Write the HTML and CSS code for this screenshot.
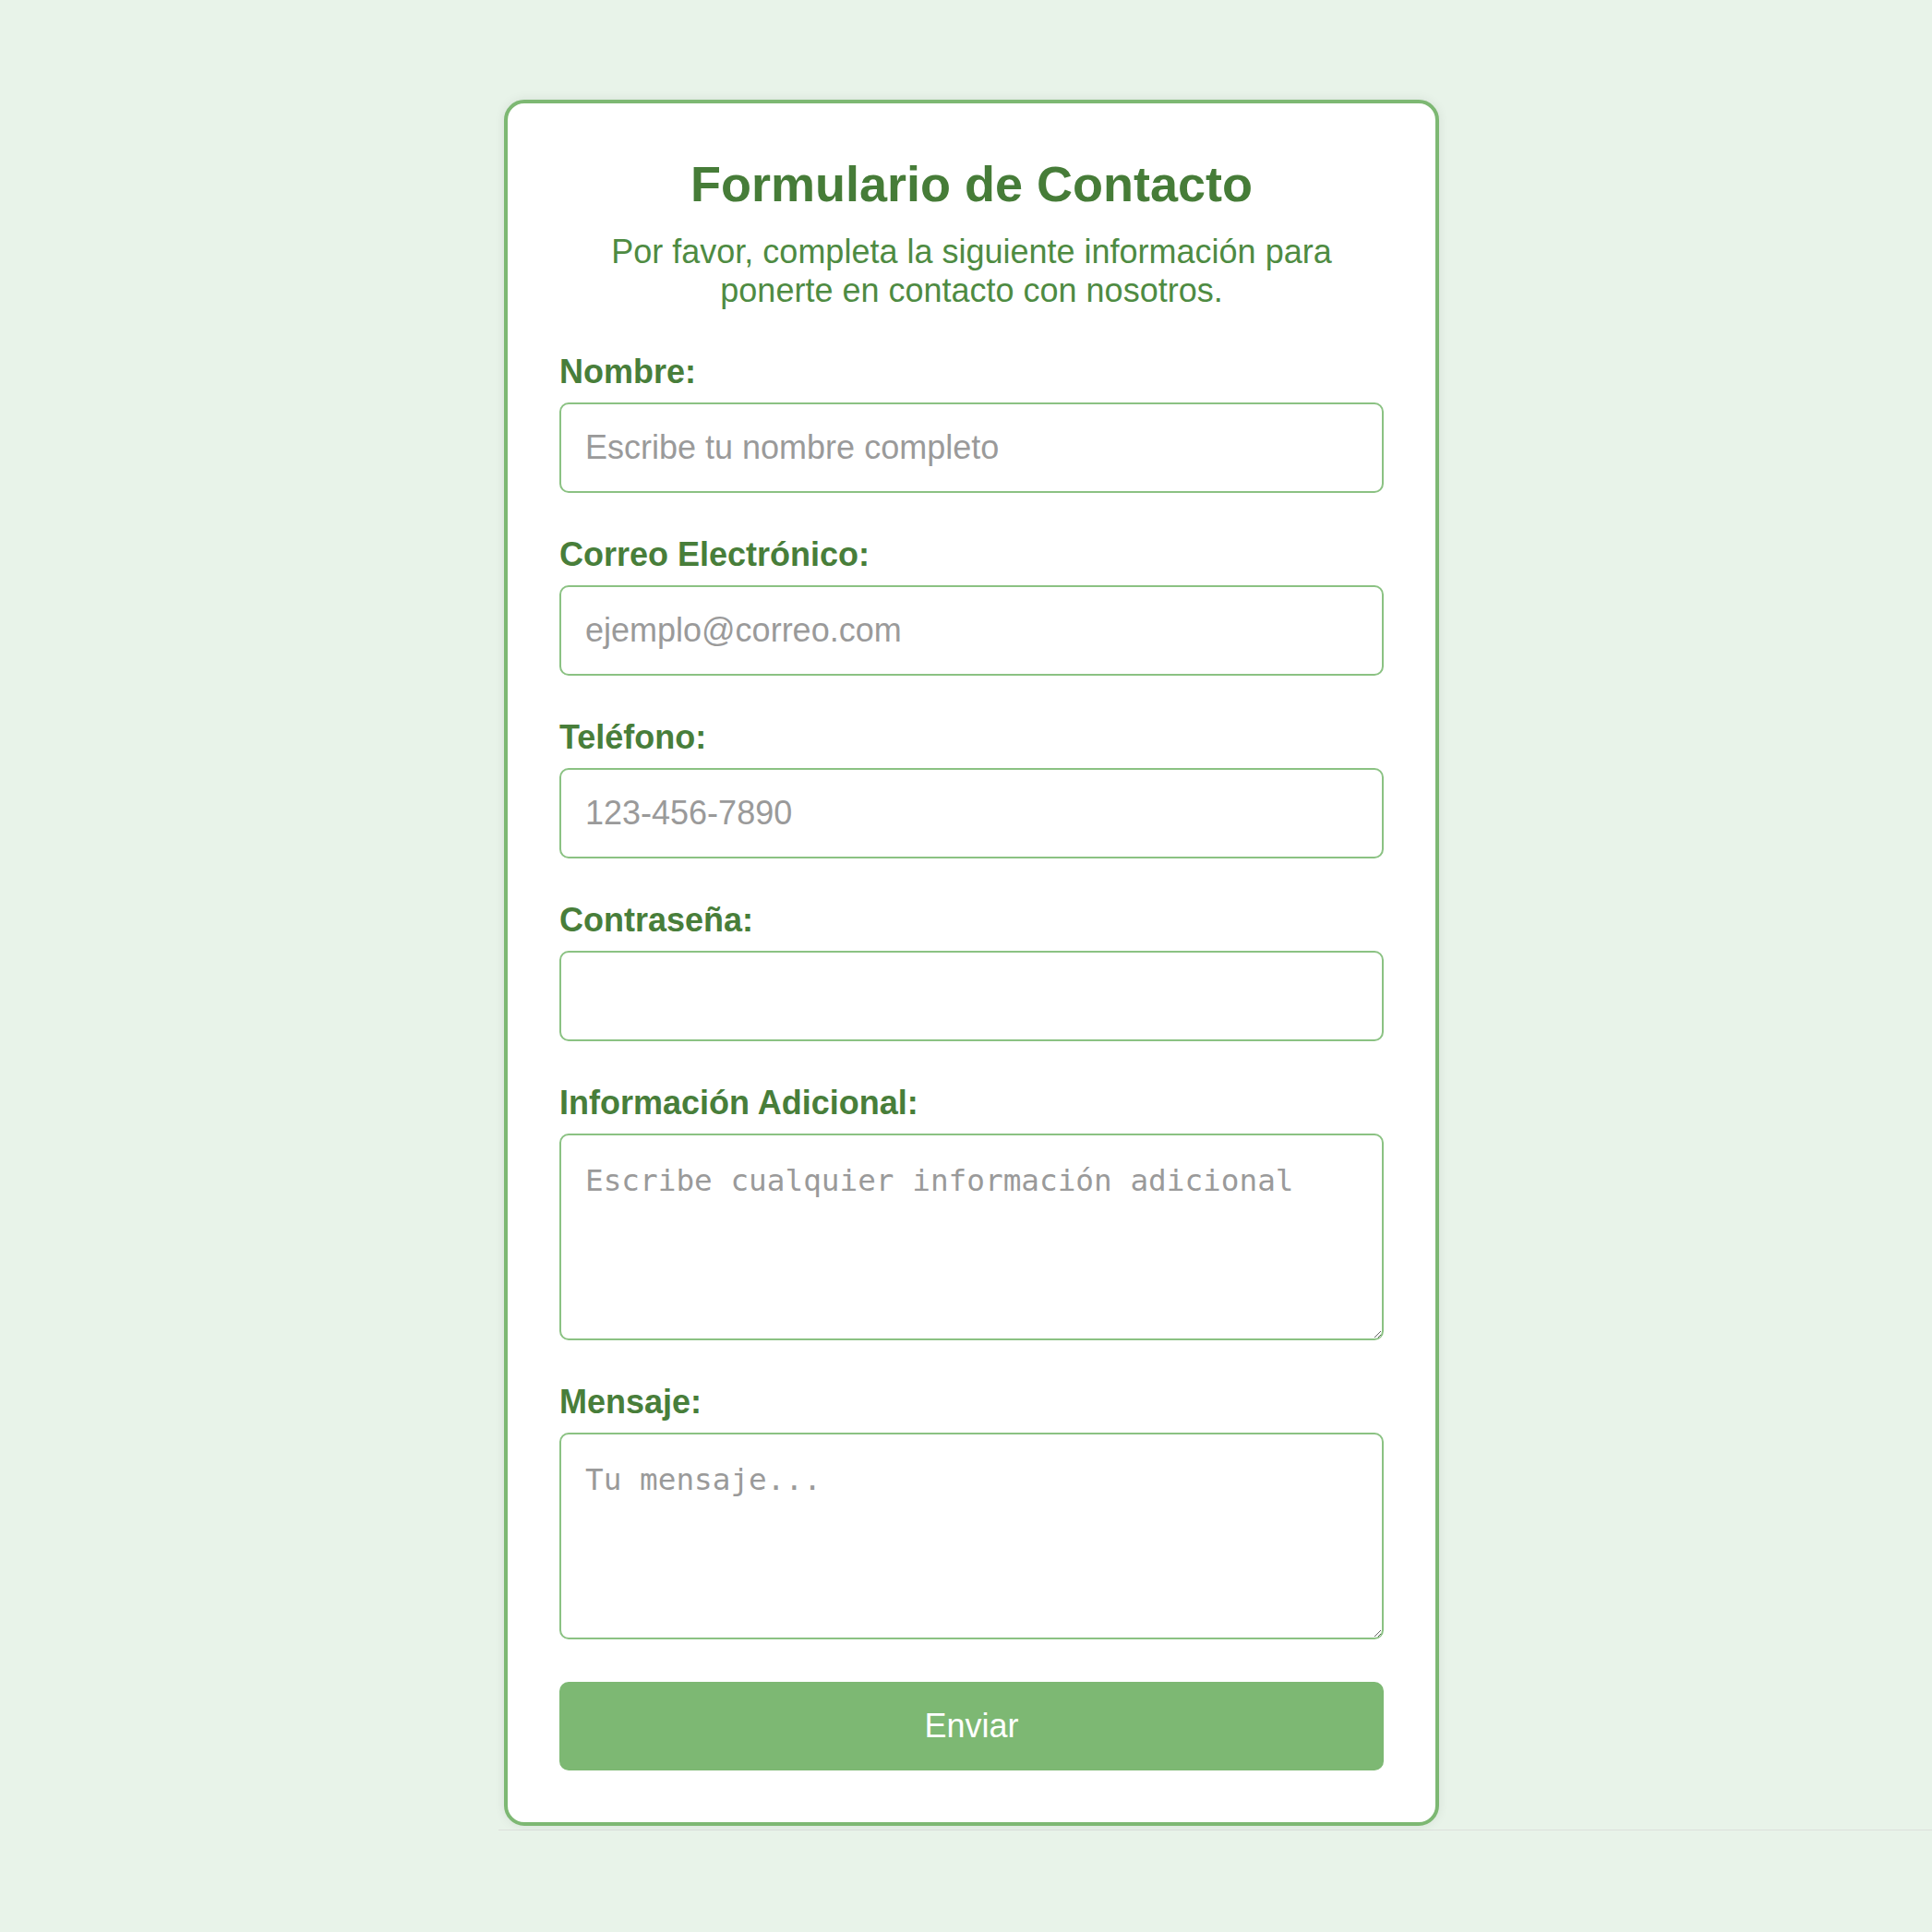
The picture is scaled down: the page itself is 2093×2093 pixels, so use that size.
FILE: index.html
```html
<!DOCTYPE html>
<html lang="es">
<head>
  <meta charset="UTF-8">
  <title>Formulario de Contacto</title>
  <link rel="stylesheet" href="styles.css">
</head>
<body>

  <div class="page">
    <form class="card" onsubmit="return false;">
      <h1>Formulario de Contacto</h1>
      <p class="intro">Por favor, completa la siguiente información para ponerte en contacto con nosotros.</p>

      <div class="campo">
        <label for="nombre">Nombre:</label>
        <input type="text" id="nombre" placeholder="Escribe tu nombre completo">
      </div>

      <div class="campo">
        <label for="correo">Correo Electrónico:</label>
        <input type="email" id="correo" placeholder="ejemplo@correo.com">
      </div>

      <div class="campo">
        <label for="telefono">Teléfono:</label>
        <input type="tel" id="telefono" placeholder="123-456-7890">
      </div>

      <div class="campo">
        <label for="clave">Contraseña:</label>
        <input type="password" id="clave">
      </div>

      <div class="campo">
        <label for="info">Información Adicional:</label>
        <textarea id="info" placeholder="Escribe cualquier información adicional"></textarea>
      </div>

      <div class="campo">
        <label for="mensaje">Mensaje:</label>
        <textarea id="mensaje" placeholder="Tu mensaje..."></textarea>
      </div>

      <button type="submit">Enviar</button>
    </form>
  </div>

</body>
</html>
```

FILE: styles.css
```css
body {
  margin: 0;
  font-family: "Liberation Sans", Arial, sans-serif;
  background-color: #e8f3e9;
  color: #487e3a;
}

.page {
  margin-left: 540px;
  padding: 108px 0 4px;
  border-bottom: 1px solid #dcdfdc;
  box-shadow: 0 2px 2px -1px rgba(0, 0, 0, 0.05);
}

.card {
  box-sizing: border-box;
  width: 1013px;
  margin-left: 6px;
  padding: 56px;
  background: #fff;
  border: 4px solid #7db873;
  border-radius: 22px;
  box-shadow: 0 0 12px rgba(0, 0, 0, 0.08);
}

h1 {
  margin: 0 0 22px;
  font-size: 54px;
  font-weight: bold;
  text-align: center;
  color: #467c38;
}

.intro {
  margin: 0 0 46px;
  font-size: 36px;
  text-align: center;
  color: #4e8b42;
}

.campo {
  margin-bottom: 46px;
}

label {
  display: block;
  margin-bottom: 12px;
  font-size: 36px;
  font-weight: bold;
  color: #487e3a;
}

input,
textarea {
  display: block;
  box-sizing: border-box;
  width: 100%;
  padding: 26px;
  font-size: 36px;
  font-family: "Liberation Sans", Arial, sans-serif;
  color: #333;
  border: 2px solid #8bc283;
  border-radius: 10px;
  background: #fff;
  outline: none;
}

textarea {
  height: 224px;
  padding-top: 30px;
  font-family: "DejaVu Sans Mono", "Liberation Mono", monospace;
  font-size: 32.7px;
  resize: vertical;
}

input::placeholder,
textarea::placeholder {
  color: #9a9a9a;
}

button {
  display: block;
  width: 100%;
  padding: 27px 0;
  font-family: "Liberation Sans", Arial, sans-serif;
  font-size: 36px;
  color: #fff;
  background-color: #7db873;
  border: none;
  border-radius: 10px;
  cursor: pointer;
}

button:hover {
  background-color: #6aa860;
}
```
